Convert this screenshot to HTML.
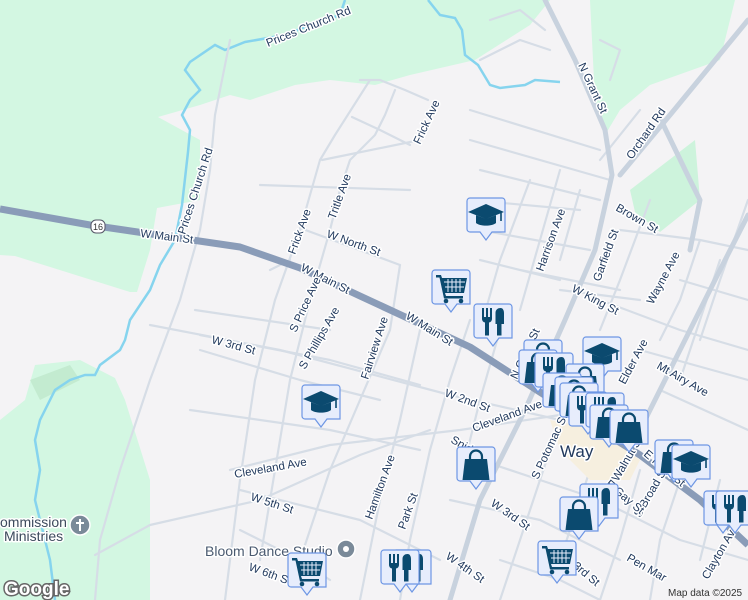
<!DOCTYPE html>
<html><head><meta charset="utf-8"><style>
html,body{margin:0;padding:0;background:#f4f3f5;}
svg{display:block}
.t{font-family:"Liberation Sans",sans-serif;font-size:11.5px;fill:#223a5e;stroke:#fff;stroke-width:3px;paint-order:stroke;stroke-linejoin:round}
.mr{fill:none;stroke:#d6dde6;stroke-width:2.2;stroke-linecap:round;stroke-linejoin:round}
.md{fill:none;stroke:#c8d2de;stroke-width:5;stroke-linecap:round;stroke-linejoin:round}
.ic{fill:#0b4a6f}
</style></head><body>
<svg width="748" height="600" viewBox="0 0 748 600" xmlns="http://www.w3.org/2000/svg">
<defs>
<g id="box"><path d="M3,0H35a3 3 0 0 1 3 3V34H25L19,42L13,34H3a3 3 0 0 1-3-3V3a3 3 0 0 1 3-3Z" fill="#e7edfc" stroke="#6d96e4" stroke-width="1.2"/></g>
<g id="cart"><use href="#box"/><path class="ic" d="M4,5h5l1,3h25l-3,15H13l1,3h17v2.5H12L7.5,7.5H4Z"/><path d="M12,12h21M13,17h19M16,9v13M20,9v13M24,9v13M28,9v13" stroke="#e7edfc" stroke-width="1"/><circle class="ic" cx="14" cy="31" r="2.3"/><circle class="ic" cx="29" cy="31" r="2.3"/></g>
<g id="fork"><use href="#box"/><path class="ic" d="M8,4h2v9h2v-9h2v9h2v-9h2v11a3.5 3.5 0 0 1-3,3.5v13h-4v-13a3.5 3.5 0 0 1-3-3.5Z"/><path class="ic" d="M23,31.5V20h-1.5V9c0-3.5 2.5-5 5-5s3.5 2.5 3.5 5v11h-2.5v11.5Z"/></g>
<g id="grad"><use href="#box"/><path class="ic" d="M19,6L37,14L19,21L1,14Z M9,17v8c4,3.5 16,3.5 20,0v-8l-10,4Z"/><path d="M34,15v8" stroke="#0b4a6f" stroke-width="1.6"/></g>
<g id="bag"><use href="#box"/><path class="ic" d="M8,12h22l2.5,21H5.5Z"/><path d="M13,12v-2.5a6 6 0 0 1 12,0v2.5" fill="none" stroke="#0b4a6f" stroke-width="2.2"/></g>
</defs>
<rect width="748" height="600" fill="#f4f3f5"/>
<path d="M0,0H550L530,25L475,60L410,75L375,85L330,80L295,85L250,100L230,95L200,105L158,117L200,140L200,200L157,208L150,250L137,292L130,292L15,256L0,255Z" fill="#d3f7e2"/>
<path d="M590,0H735L720,60L650,85L620,110L605,135L595,100Z" fill="#d3f7e2"/>
<path d="M630,190L695,140L700,200L660,232L635,212Z" fill="#cdf3dc"/>
<path d="M0,420L25,400L35,365L80,360L115,378L125,400L150,480L150,600H0Z" fill="#d3f7e2"/>
<path d="M30,380L70,365L80,380L40,400Z" fill="#c3ebd0"/>
<path d="M345,0L340,15L310,25L285,35L245,42L225,50L215,45L190,62L185,70L200,90L190,100L182,115L190,130L188,152L182,205L175,240L160,265L150,290L130,320L125,340L120,350L100,365L95,375L85,375L70,380L55,390L50,400L40,420L35,440L40,470L35,500L40,520L50,560L55,600" fill="none" stroke="#86d4ee" stroke-width="2.5"/>
<path d="M428,0L440,15L455,18L462,30L465,55L478,65L490,85L500,88L525,85L535,80L560,82" fill="none" stroke="#86d4ee" stroke-width="2.5"/>
<path class="mr" d="M230,40L225,65L215,115L210,170L200,230L180,300L150,380L120,470L100,540L95,600"/>
<path class="mr" d="M360,80L380,80L405,90L428,100M370,80L335,135L320,160L300,230L275,300L255,380L240,480L225,600"/>
<path class="mr" d="M395,90L385,115L375,135L350,160L340,190L330,230L310,300L290,380L275,470L260,560"/>
<path class="mr" d="M352,117L380,130L410,145M322,160L420,140"/>
<path class="mr" d="M260,185L410,190M300,228L400,265M270,270L290,260M195,310L330,330M150,325L280,350L450,395L560,420"/>
<path class="mr" d="M200,335L330,360L420,385M200,350L300,380L380,400M190,410L330,430L420,450"/>
<path class="mr" d="M230,470L330,445L460,430L560,415M240,490L360,520L440,560M240,530L300,560L330,580"/>
<path class="mr" d="M95,555L150,525L260,500L360,455L430,430"/>
<path class="mr" d="M400,265L390,330L360,400L330,470L300,560M420,330L400,420L380,500L360,600"/>
<path class="mr" d="M470,320L450,380L430,450L410,540L400,600M500,330L480,400L460,480"/>
<path class="mr" d="M470,110L600,150M470,140L610,180M480,170L600,200M470,200L580,210M480,230L590,250M520,270L620,290M560,290L640,300M480,260L560,280"/>
<path class="mr" d="M530,180L500,260L480,330M560,170L540,240L520,310M580,190L560,260M640,110L600,160M650,200L620,280L600,330"/>
<path class="mr" d="M620,230L700,240L748,250M600,300L680,330L748,350M640,350L748,380M660,390L748,430M680,280L748,300"/>
<path class="mr" d="M700,240L680,300L660,340M720,260L700,320L680,380M748,200L720,280L700,340"/>
<path class="mr" d="M480,460L540,480L600,500L680,540L748,560M450,500L540,520L620,560M500,560L560,580L600,600"/>
<path class="mr" d="M560,420L540,480L520,540L500,600M600,440L580,500L560,560M640,470L620,540L600,600M680,480L660,540L650,600M720,480L700,560"/>
<path class="mr" d="M490,20L520,10L545,30M480,60L520,40L550,50M600,40L620,50L610,80"/>
<path class="md" d="M545,0L575,60L605,130L612,175L595,250L565,320L525,410L480,500L450,600"/>
<path class="md" d="M748,20L670,115L620,175"/>
<path class="md" d="M748,215L720,270L690,330L660,390L630,450"/>
<path class="md" d="M660,118L690,180L700,200L690,250"/>
<path d="M550,420L600,430L640,460L630,480L590,480L560,450Z" fill="#f6efdf"/>
<path d="M0,209L90,225L240,247L300,268L360,296L470,347L560,405L640,455L700,500L748,545" fill="none" stroke="#8a9cb8" stroke-width="7" stroke-linejoin="round"/>
<rect x="91" y="220" width="14" height="13" rx="5" fill="#fff" stroke="#556" stroke-width="1"/>
<text x="98" y="230" text-anchor="middle" font-family="Liberation Sans" font-size="9" fill="#333">16</text>
<text class="t" x="140" y="237" transform="rotate(7 140 237)">W Main St</text>
<text class="t" x="300" y="270" transform="rotate(27 300 270)">W Main St</text>
<text class="t" x="405" y="318" transform="rotate(32 405 318)">W Main St</text>
<text class="t" x="643" y="455" transform="rotate(40 643 455)">E Main St</text>
<text class="t" x="268" y="47" transform="rotate(-22 268 47)">Prices Church Rd</text>
<text class="t" x="185" y="235" transform="rotate(-72 185 235)">Prices Church Rd</text>
<text class="t" x="420" y="145" transform="rotate(-65 420 145)">Frick Ave</text>
<text class="t" x="295" y="255" transform="rotate(-70 295 255)">Frick Ave</text>
<text class="t" x="335" y="220" transform="rotate(-70 335 220)">Tritle Ave</text>
<text class="t" x="326" y="237" transform="rotate(20 326 237)">W North St</text>
<text class="t" x="296" y="333" transform="rotate(-65 296 333)">S Price Ave</text>
<text class="t" x="305" y="370" transform="rotate(-60 305 370)">S Phillips Ave</text>
<text class="t" x="211" y="343" transform="rotate(15 211 343)">W 3rd St</text>
<text class="t" x="368" y="380" transform="rotate(-72 368 380)">Fairview Ave</text>
<text class="t" x="444" y="396" transform="rotate(20 444 396)">W 2nd St</text>
<text class="t" x="474" y="432" transform="rotate(-20 474 432)">Cleveland Ave</text>
<text class="t" x="235" y="478" transform="rotate(-10 235 478)">Cleveland Ave</text>
<text class="t" x="250" y="500" transform="rotate(18 250 500)">W 5th St</text>
<text class="t" x="248" y="570" transform="rotate(20 248 570)">W 6th St</text>
<text class="t" x="372" y="520" transform="rotate(-70 372 520)">Hamilton Ave</text>
<text class="t" x="405" y="530" transform="rotate(-70 405 530)">Park St</text>
<text class="t" x="445" y="558" transform="rotate(35 445 558)">W 4th St</text>
<text class="t" x="490" y="505" transform="rotate(35 490 505)">W 3rd St</text>
<text class="t" x="517" y="380" transform="rotate(-65 517 380)">N Grant St</text>
<text class="t" x="538" y="480" transform="rotate(-65 538 480)">S Potomac St</text>
<text class="t" x="578" y="65" transform="rotate(65 578 65)">N Grant St</text>
<text class="t" x="632" y="160" transform="rotate(-55 632 160)">Orchard Rd</text>
<text class="t" x="615" y="210" transform="rotate(30 615 210)">Brown St</text>
<text class="t" x="543" y="272" transform="rotate(-70 543 272)">Harrison Ave</text>
<text class="t" x="600" y="282" transform="rotate(-70 600 282)">Garfield St</text>
<text class="t" x="571" y="291" transform="rotate(28 571 291)">W King St</text>
<text class="t" x="653" y="305" transform="rotate(-62 653 305)">Wayne Ave</text>
<text class="t" x="656" y="368" transform="rotate(30 656 368)">Mt Airy Ave</text>
<text class="t" x="625" y="385" transform="rotate(-62 625 385)">Elder Ave</text>
<text class="t" x="618" y="482" transform="rotate(-60 618 482)">Walnut St</text>
<text class="t" x="640" y="518" transform="rotate(-60 640 518)">S Broad St</text>
<text class="t" x="605" y="485" transform="rotate(40 605 485)">E Gay St</text>
<text class="t" x="626" y="560" transform="rotate(30 626 560)">Pen Mar</text>
<text class="t" x="708" y="580" transform="rotate(-60 708 580)">Clayton Ave</text>
<text class="t" x="564" y="560" transform="rotate(40 564 560)">E 3rd St</text>
<text class="t" x="560" y="457" style="font-size:17px">Way</text>
<text class="t" x="450" y="442" transform="rotate(30 450 442)">Snid</text>
<text class="t" x="0" y="527" style="font-size:14px;fill:#3c4a5c">ommission</text>
<text class="t" x="4" y="541" style="font-size:14px;fill:#3c4a5c">Ministries</text>
<circle cx="80" cy="525" r="10" fill="#7a8a99" stroke="#fff" stroke-width="1.5"/>
<path d="M80,519v12M76,523h8" stroke="#fff" stroke-width="2"/>
<text class="t" x="205" y="556" style="font-size:14px;fill:#4a5a70">Bloom Dance Studio</text>
<circle cx="346" cy="549" r="9" fill="#7a8a99" stroke="#fff" stroke-width="1.5"/>
<circle cx="346" cy="549" r="3" fill="#fff"/>
<text x="4" y="595" font-family="Liberation Sans" font-size="19" font-weight="bold" fill="#fff" stroke="#666" stroke-width="3" paint-order="stroke">Google</text>
<rect x="664" y="586" width="84" height="14" fill="#f4f3f5" opacity="0.8"/>
<text x="668" y="596" font-family="Liberation Sans" font-size="10" fill="#333">Map data ©2025</text>
<use href="#grad" x="467" y="198"/>
<use href="#cart" x="432" y="270"/>
<use href="#fork" x="474" y="304"/>
<use href="#grad" x="302" y="385"/>
<use href="#bag" x="457" y="447"/>
<use href="#bag" x="524" y="340"/>
<use href="#grad" x="583" y="337"/>
<use href="#bag" x="519" y="350"/>
<use href="#fork" x="535" y="353"/>
<use href="#bag" x="566" y="364"/>
<use href="#bag" x="543" y="373"/>
<use href="#bag" x="555" y="377"/>
<use href="#bag" x="560" y="383"/>
<use href="#fork" x="569" y="392"/>
<use href="#fork" x="586" y="393"/>
<use href="#bag" x="590" y="405"/>
<use href="#bag" x="610" y="410"/>
<use href="#bag" x="655" y="440"/>
<use href="#grad" x="672" y="445"/>
<use href="#fork" x="580" y="484"/>
<use href="#bag" x="560" y="497"/>
<use href="#fork" x="704" y="491"/>
<use href="#fork" x="716" y="491"/>
<use href="#cart" x="538" y="541"/>
<use href="#fork" x="393" y="550"/>
<use href="#fork" x="381" y="550"/>
<use href="#cart" x="288" y="553"/>
</svg>
</body></html>
